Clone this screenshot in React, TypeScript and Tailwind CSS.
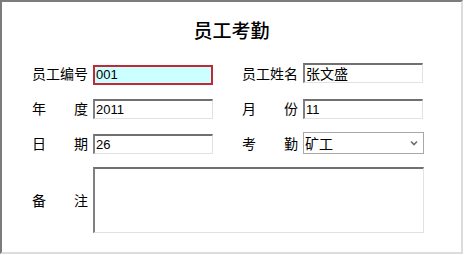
import React from 'react';

const cjk = "font-['Noto_Sans_CJK_SC','Noto_Sans',sans-serif]";
const field = "font-['Liberation_Sans','Noto_Sans_CJK_SC',sans-serif]";

const Label = ({ chars }: { chars: string[] }) => (
  <div className={`w-[56px] flex justify-between text-[14px] leading-none text-black ${cjk}`}>
    {chars.map((c, i) => (
      <span key={i}>{c}</span>
    ))}
  </div>
);

const TextBox = ({ value, active, cn }: { value: string; active?: boolean; cn?: boolean }) => (
  <input
    readOnly
    value={value}
    className={
      'w-[120px] h-[20px] pl-[1px] text-[13px] leading-none text-black outline-none ' +
      (cn ? cjk + ' text-[14px] ' : field + ' ') +
      (active
        ? 'border-2 border-[#bf2a34] bg-[#ccffff]'
        : 'border-t-2 border-l-2 border-r border-b border-t-[#707070] border-l-[#808080] border-r-[#e2e2e2] border-b-[#e2e2e2] bg-white')
    }
  />
);

const Row = ({ children }: { children: React.ReactNode }) => (
  <div className="flex items-center h-[20px]">{children}</div>
);

export default function App() {
  return (
    <div className="w-[465px] h-[255px] bg-white">
      <div className="w-[463px] h-[254px] border-t-2 border-l-2 border-r-2 border-b-2 border-t-[#7c7c7c] border-l-[#7c7c7c] border-r-[#dcdcdc] border-b-[#dcdcdc] bg-white pl-[30px] pt-[18px]">
        <h1 className={`text-center pr-[30px] text-[19px] leading-[19px] h-[19px] font-medium text-black ${cjk}`}>
          员工考勤
        </h1>

        <div className="mt-[24px] flex flex-col gap-[15px]">
          <Row>
            <Label chars={['员', '工', '编', '号']} />
            <div className="ml-[5px]">
              <TextBox value="001" active />
            </div>
            <div className="ml-[29px]">
              <Label chars={['员', '工', '姓', '名']} />
            </div>
            <div className="ml-[5px]">
              <TextBox value="张文盛" cn />
            </div>
          </Row>
          <Row>
            <Label chars={['年', '度']} />
            <div className="ml-[5px]">
              <TextBox value="2011" />
            </div>
            <div className="ml-[29px]">
              <Label chars={['月', '份']} />
            </div>
            <div className="ml-[5px]">
              <TextBox value="11" />
            </div>
          </Row>
          <Row>
            <Label chars={['日', '期']} />
            <div className="ml-[5px]">
              <TextBox value="26" />
            </div>
            <div className="ml-[29px]">
              <Label chars={['考', '勤']} />
            </div>
            <div className={`ml-[5px] w-[121px] h-[22px] shrink-0 border border-[#a8a8a8] bg-white flex items-center justify-between pl-[1px] pr-[5px] text-[14px] leading-none text-black ${cjk}`}>
              <span>矿工</span>
              <svg width="8" height="6" viewBox="0 0 8 6">
                <path d="M1 1.5 L4 4.5 L7 1.5" fill="none" stroke="#6e6e6e" strokeWidth="1.6" />
              </svg>
            </div>
          </Row>
        </div>

        <div className="mt-[14px] flex items-center">
          <Label chars={['备', '注']} />
          <textarea
            readOnly
            className="ml-[5px] w-[331px] h-[66px] resize-none outline-none border-t-2 border-l-2 border-r border-b border-t-[#707070] border-l-[#808080] border-r-[#e2e2e2] border-b-[#e2e2e2] bg-white"
          />
        </div>
      </div>
    </div>
  );
}
